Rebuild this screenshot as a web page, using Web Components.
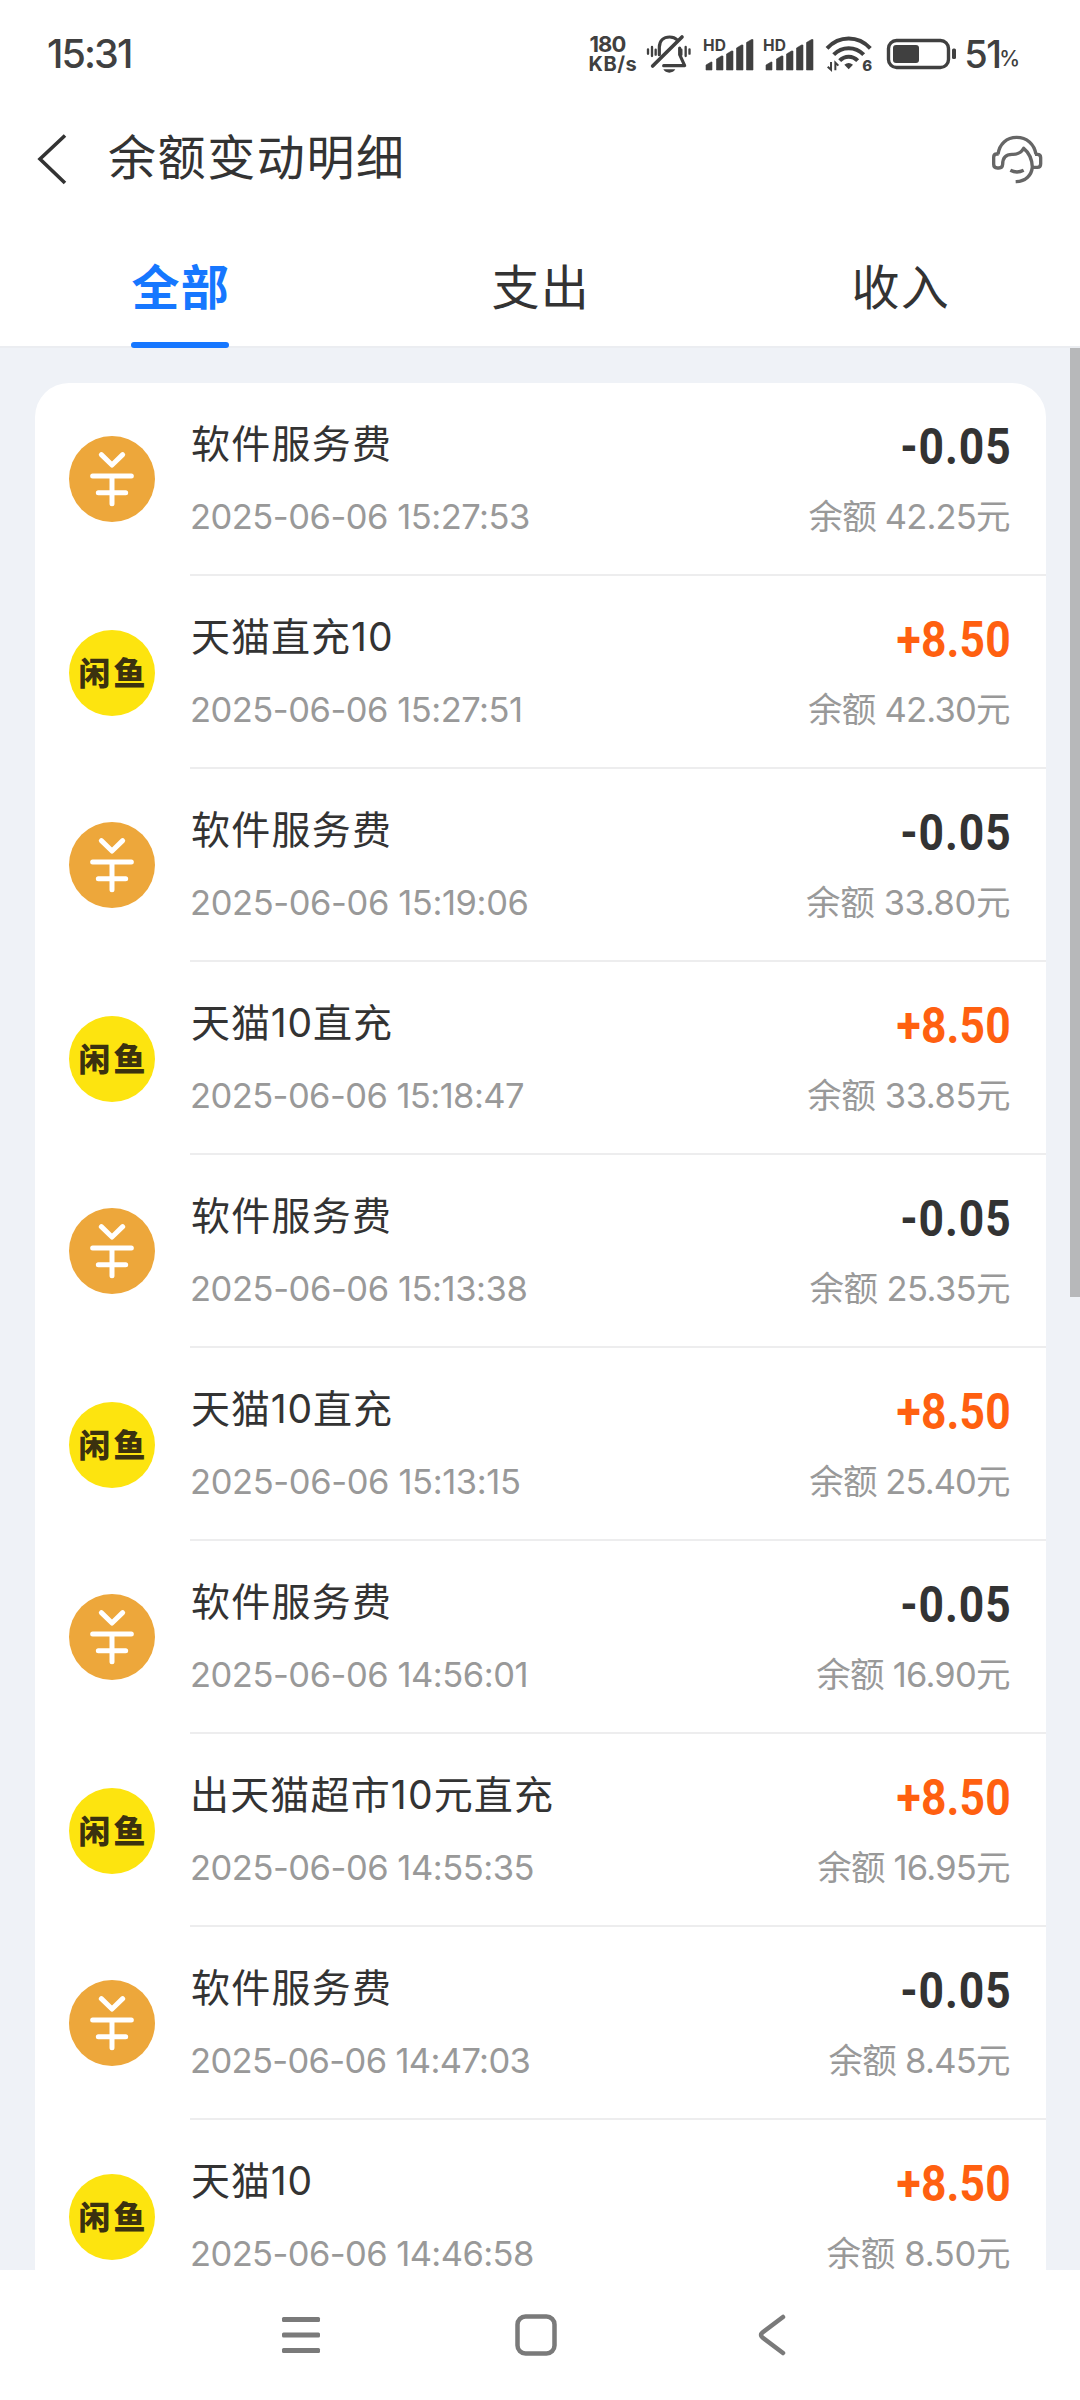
<!DOCTYPE html>
<html lang="zh-CN">
<head>
<meta charset="utf-8">
<title>余额变动明细</title>
<style>
html,body{margin:0;padding:0;background:#fff}
body{width:1080px;height:2400px;overflow:hidden;font-family:Inter,"Noto Sans CJK SC",sans-serif;color:#333}
</style>
</head>
<body>
<balance-app></balance-app>
<script>
const ctx = document.createElement('canvas').getContext('2d');
const put = (el, html) => { el.attachShadow({mode:'open'}).innerHTML = html; };

/* A line of text whose tracking is set so that its ink spans `w` pixels. */
customElements.define('ink-text', class extends HTMLElement {
  connectedCallback() {
    if (this.shadowRoot) return;
    put(this, `<style>:host{display:inline-block;white-space:pre;flex:none}</style><slot></slot>`);
    const w = +this.getAttribute('w'), sx = +(this.getAttribute('sx') || 1), t = this.textContent;
    if (!w) return;
    const cs = getComputedStyle(this);
    ctx.font = `${cs.fontWeight} ${cs.fontSize} ${cs.fontFamily}`;
    const m = ctx.measureText(t), l = m.actualBoundingBoxLeft, r = m.actualBoundingBoxRight;
    const ls = (w / sx - l - r) / (t.length - 1);
    this.style.letterSpacing = ls + 'px';
    this.style.marginLeft = l + 'px';
    this.style.marginRight = -(m.width - r + ls) * sx + 'px';
    if (sx !== 1) { this.style.transform = `scaleX(${sx})`; this.style.transformOrigin = 'right'; }
  }
});

const signal = `<svg width="52" height="36" viewBox="0 0 52 36" fill="#404040">
<text x="0" y="15.500" font-family="Inter" font-weight="700" font-size="15.5" textLength="23">HD</text>
<path d="M3 35V30L8 27H9V35ZM13.500 35V24L18.500 21H20V35ZM23.500 35V19L28.500 16H30V35ZM33.500 35V13L38.500 10H40V35ZM43.500 35V7.500L48.500 4.500H50V35Z" stroke="#404040" stroke-width=".6" stroke-linejoin="round"/></svg>`;

customElements.define('status-bar', class extends HTMLElement {
  connectedCallback() {
    put(this, `<style>
:host{display:flex;align-items:center;justify-content:space-between;height:110px;padding:0 60px 2px 48px;color:#404040;box-sizing:border-box}
.t{font-size:39.500px;font-weight:500;line-height:44px}
.r{display:flex;align-items:center}
.k{display:flex;flex-direction:column;gap:1px;width:47px;font-weight:700;align-items:flex-start}
.k ink-text:first-child{font-size:22px;line-height:19px}.k ink-text:last-child{font-size:20px;line-height:19px}
svg{display:block;flex:none;overflow:visible}
.g{margin-top:-3px}
.b{font-size:38px;font-weight:500;line-height:40px;margin:0 0 0 9px}
.p{font-size:21px;font-weight:500;line-height:24px;margin-top:9px}
</style>
<ink-text class="t" w="83">15:31</ink-text>
<div class="r">
<div class="k"><ink-text w="36">180</ink-text><ink-text w="47">KB/s</ink-text></div>
<svg style="margin-left:10px" width="46" height="40" viewBox="261 44 138 120" fill="none" stroke="#404040" stroke-width="9.500" stroke-linecap="round" stroke-linejoin="round">
<path d="M301 106V84C301 63 314 53 332 53C342 53 349 56 355 62"/><path d="M362 86V106L377 139H314"/>
<path d="M281 140L369 53" stroke-width="11"/><path d="M313 150H349Q343 160 331 160Q319 160 313 150Z" fill="#404040" stroke="none"/>
<path d="M267 90V103M279 83V110M290 91V106M367 91V106M380 83V110M391.500 90V103" stroke-width="7"/></svg>
<div class="g" style="margin-left:11px">${signal}</div><div class="g" style="margin-left:8px">${signal}</div>
<svg style="margin-left:10px" width="48.700" height="37.300" viewBox="48 49 146 112" fill="none" stroke="#404040" stroke-width="12">
<path d="M54 89C91 50 147 50 184 89M74 108C99 82 139 82 164 108M92 126C107 110 131 110 146 126"/>
<path d="M106 138Q119 128 132 138L119 152Z" fill="#404040" stroke="none"/>
<path d="M66 130V153L56 144M79 155V132L88 141" stroke-width="6"/>
<text x="160" y="157" font-family="Inter" font-weight="800" font-size="45" fill="#404040" stroke="none">6</text></svg>
<svg style="margin-left:12px" width="71" height="32" viewBox="0 0 71 32"><rect x="2.500" y="2.500" width="60" height="27" rx="8" fill="none" stroke="#404040" stroke-width="3.400"/><rect x="7" y="7" width="26" height="18" rx="3" fill="#404040"/><rect x="66" y="10.500" width="4" height="10.500" rx="1.500" fill="#404040"/></svg>
<div class="b"><ink-text w="33">51</ink-text></div><ink-text class="p">%</ink-text>
</div>`);
  }
});

customElements.define('title-bar', class extends HTMLElement {
  connectedCallback() {
    put(this, `<style>
:host{display:flex;align-items:center;height:104px;padding:0 20px 9px 36px;box-sizing:border-box}
.h{font-size:48px;line-height:60px;margin-left:41px}
.s{margin-left:auto;margin-top:4px}svg{display:block;flex:none}
</style>
<svg width="32" height="54" viewBox="0 0 32 54" style="margin-top:3px"><path d="M29 3.500L4 27L29 51" fill="none" stroke="#333" stroke-width="3.600"/></svg>
<div class="h"><ink-text w="292">${this.textContent}</ink-text></div>
<svg class="s" width="80" height="70" viewBox="0 0 240 210" fill="none" stroke="#666" stroke-width="10" stroke-linejoin="round">
<path d="M54 88C58 57 80 37 110 37S163 57 168 88"/>
<path d="M56 87H50Q41 87 41 97V118Q41 129 52 129H57Q67 129 68 118C68 99 78 88 96 88C114 89 124 83 131 70C147 83 156 100 157 126C155 150 138 169 107 170"/>
<path d="M165 88H172Q182 88 182 98V116Q182 127 172 127H157M91 136Q111 146 131 136"/></svg>`);
  }
});

customElements.define('tab-item', class extends HTMLElement {
  connectedCallback() {
    put(this, `<style>
:host{display:flex;flex:1;justify-content:center;align-items:center;position:relative;height:132px;font-size:48px;line-height:60px;letter-spacing:1.200px;box-sizing:border-box}
:host([active]){color:#1677ff;font-weight:700}
:host([active])::after{content:"";position:absolute;left:50%;bottom:-2px;width:98px;height:6.500px;margin-left:-49px;border-radius:4px;background:#1677ff}
span{margin-top:15px;padding-left:1.500px}
</style><span><slot></slot></span>`);
  }
});
customElements.define('tab-strip', class extends HTMLElement {
  connectedCallback() {
    put(this, `<style>:host{display:flex;position:relative;z-index:1;background:#fff}</style><slot></slot>`);
  }
});

const icons = {
  fee: `<svg width="86" height="86" viewBox="27 33 258 258"><circle cx="156" cy="162" r="129" fill="#eda73b"/><path d="M124 89L156 120L188 89M98 153H214M115 203H197M156 153V236" fill="none" stroke="#fff" stroke-width="15" stroke-linecap="round" stroke-linejoin="round"/></svg>`,
  fish: `<div class="fish"><ink-text w="65">闲鱼</ink-text></div>`
};
customElements.define('record-row', class extends HTMLElement {
  connectedCallback() {
    const a = k => this.getAttribute(k), plus = a('amount')[0] === '+';
    put(this, `<style>
:host{display:flex;height:193px;align-items:center;padding-left:34px;box-sizing:border-box}
svg{display:block;flex:none;margin-top:-1px}
.fish{width:86px;height:86px;padding-bottom:4px;box-sizing:border-box;border-radius:50%;background:#fde40f;color:#3b310f;display:flex;align-items:center;justify-content:center;font:900 32px/40px "Noto Sans CJK SC",sans-serif;flex:none}
.b{flex:1;display:flex;justify-content:space-between;height:193px;margin-left:35px;padding:32px 36px 0 2px;border-bottom:2px solid #ededee;box-sizing:border-box}
.c{display:flex;flex-direction:column;align-items:flex-start}.c:last-child{align-items:flex-end}
.n{font-size:39px;line-height:58px}
.s{font-size:34.500px;line-height:44px;color:#999;margin-top:22px}
.v{font-family:Roboto,sans-serif;font-weight:700;font-size:50.500px;line-height:58px;color:${plus ? '#ff6010' : '#333'};position:relative;top:3px;right:1.500px}
</style>${icons[plus ? 'fish' : 'fee']}
<div class="b"><div class="c"><ink-text class="n" w="${a('nw')}" style="${a('name')[0] === '出' ? 'padding-left:2px' : ''}">${a('name')}</ink-text><ink-text class="s" w="${a('dw')}">${a('time')}</ink-text></div>
<div class="c"><ink-text class="v" sx="0.88" w="${plus ? 111.5 : 107}">${a('amount')}</ink-text><ink-text class="s" w="${a('bw')}">余额 ${a('balance')}元</ink-text></div></div>`);
  }
});

const rows = [
 ['软件服务费','15:27:53','42.25',197,337,201.5],
 ['天猫直充10','15:27:51','42.30',199,328,202],
 ['软件服务费','15:19:06','33.80',197,335.5,204],
 ['天猫10直充','15:18:47','33.85',199,331,202.7],
 ['软件服务费','15:13:38','25.35',197,334.5,200.4],
 ['天猫10直充','15:13:15','25.40',199,327,200.7],
 ['软件服务费','14:56:01','16.90',197,333.5,193.7],
 ['出天猫超市10元直充','14:55:35','16.95',358,340.5,192.7],
 ['软件服务费','14:47:03','8.45',197,337.5,181.4],
 ['天猫10','14:46:58','8.50',118.5,341,183.5]
];
customElements.define('record-list', class extends HTMLElement {
  connectedCallback() {
    put(this, `<style>
:host{display:block;height:1924px;overflow:hidden;background:#eff2f7;position:relative;box-sizing:border-box;padding:37px 34px 0 35px}
:host::before{content:"";position:absolute;left:0;right:0;top:0;height:2px;background:#ebedf1}
.card{background:#fff;border-radius:34px 34px 0 0}
.bar{position:absolute;right:0;top:2px;width:10px;height:949px;background:#b7b8ba}
</style><div class="card">${rows.map((r, i) => `<record-row name="${r[0]}" time="2025-06-06 ${r[1]}" balance="${r[2]}" nw="${r[3]}" dw="${r[4]}" bw="${r[5]}" amount="${i % 2 ? '+8.50' : '-0.05'}"></record-row>`).join('')}</div><div class="bar"></div>`);
  }
});

customElements.define('nav-bar', class extends HTMLElement {
  connectedCallback() {
    put(this, `<style>:host{display:flex;height:130px;align-items:center;justify-content:center;gap:191.500px;padding-right:8px;box-sizing:border-box;background:#fff}svg{display:block}</style>
<svg width="44" height="44" viewBox="0 0 44 44" fill="#7a7a7a"><rect x="3" y="4" width="38" height="5" rx="1.500"/><rect x="3" y="19.500" width="38" height="5" rx="1.500"/><rect x="3" y="35" width="38" height="5" rx="1.500"/></svg>
<svg width="44" height="44" viewBox="0 0 44 44"><rect x="3.500" y="3.500" width="37" height="37" rx="8" fill="none" stroke="#7a7a7a" stroke-width="4.500"/></svg>
<svg width="44" height="44" viewBox="0 0 44 44"><path d="M33 4L12.500 19.500Q9.500 22 12.500 24.500L33 40" fill="none" stroke="#7a7a7a" stroke-width="4.500" stroke-linecap="round"/></svg>`);
  }
});

customElements.define('balance-app', class extends HTMLElement {
  connectedCallback() {
    put(this, `<style>:host{display:flex;flex-direction:column;width:1080px;height:2400px;background:#fff}</style>
<status-bar></status-bar><title-bar>余额变动明细</title-bar>
<tab-strip><tab-item active>全部</tab-item><tab-item>支出</tab-item><tab-item>收入</tab-item></tab-strip>
<record-list></record-list><nav-bar></nav-bar>`);
  }
});
</script>
</body>
</html>
